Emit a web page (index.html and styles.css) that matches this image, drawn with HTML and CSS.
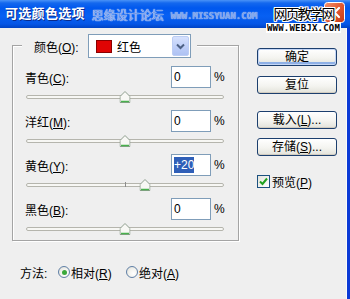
FILE: index.html
```html
<!DOCTYPE html>
<html lang="zh-CN">
<head>
<meta charset="utf-8">
<title>可选颜色选项</title>
<link rel="stylesheet" href="styles.css">
</head>
<body>
<div class="window">
  <div class="titlebar">
    <span class="title">可选颜色选项</span>
    <span class="wm-cn">思缘设计论坛</span>
    <span class="wm-url">WWW.MISSYUAN.COM</span>
    <svg class="close" width="21" height="21" viewBox="0 0 21 21">
      <defs>
        <linearGradient id="cg" x1="0" y1="0" x2="1" y2="1">
          <stop offset="0" stop-color="#f3946f"/>
          <stop offset=".5" stop-color="#e2582f"/>
          <stop offset="1" stop-color="#c43a16"/>
        </linearGradient>
      </defs>
      <rect x=".5" y=".5" width="20" height="20" rx="3" fill="url(#cg)" stroke="#fff"/>
      <path d="M6 6 L15 15 M15 6 L6 15" stroke="#fff" stroke-width="2.2" stroke-linecap="round"/>
    </svg>
    <div class="wm-webjx">
      <span class="wm-webjx-cn">网页教学网</span>
      <span class="wm-webjx-url">WWW.WEBJX.COM</span>
    </div>
  </div>

  <div class="content">
    <div class="left">
      <div class="group">
        <div class="group-head">
          <span class="head-lbl">颜色(<u>O</u>):</span>
          <div class="combo">
            <span class="swatch"></span>
            <span class="combo-text">红色</span>
            <span class="combo-btn">
              <svg width="9" height="7" viewBox="0 0 9 7"><path d="M1 1.5 L4.5 5 L8 1.5" fill="none" stroke="#4d6185" stroke-width="2"/></svg>
            </span>
          </div>
        </div>

        <div class="row">
          <div class="row-top">
            <span class="row-lbl">青色(<u>C</u>):</span>
            <span class="field">0</span>
            <span class="pct">%</span>
          </div>
          <div class="slider">
            <div class="track"></div>
            <svg class="thumb" style="left:50%" width="11" height="12" viewBox="0 0 11 12"><path d="M5.5 .5 L10.5 5.5 V11.5 H.5 V5.5 Z" fill="#f8f8f5" stroke="#8e9e8e"/><path d="M1.5 10.5 H9.5" stroke="#49b04e" stroke-width="1.5"/></svg>
          </div>
        </div>

        <div class="row">
          <div class="row-top">
            <span class="row-lbl">洋红(<u>M</u>):</span>
            <span class="field">0</span>
            <span class="pct">%</span>
          </div>
          <div class="slider">
            <div class="track"></div>
            <svg class="thumb" style="left:50%" width="11" height="12" viewBox="0 0 11 12"><path d="M5.5 .5 L10.5 5.5 V11.5 H.5 V5.5 Z" fill="#f8f8f5" stroke="#8e9e8e"/><path d="M1.5 10.5 H9.5" stroke="#49b04e" stroke-width="1.5"/></svg>
          </div>
        </div>

        <div class="row">
          <div class="row-top">
            <span class="row-lbl">黄色(<u>Y</u>):</span>
            <span class="field"><span class="sel">+20</span></span>
            <span class="pct">%</span>
          </div>
          <div class="slider">
            <div class="track"></div>
            <span class="tick"></span>
            <svg class="thumb" style="left:60%" width="11" height="12" viewBox="0 0 11 12"><path d="M5.5 .5 L10.5 5.5 V11.5 H.5 V5.5 Z" fill="#f8f8f5" stroke="#8e9e8e"/><path d="M1.5 10.5 H9.5" stroke="#49b04e" stroke-width="1.5"/></svg>
          </div>
        </div>

        <div class="row">
          <div class="row-top">
            <span class="row-lbl">黑色(<u>B</u>):</span>
            <span class="field">0</span>
            <span class="pct">%</span>
          </div>
          <div class="slider">
            <div class="track"></div>
            <svg class="thumb" style="left:50%" width="11" height="12" viewBox="0 0 11 12"><path d="M5.5 .5 L10.5 5.5 V11.5 H.5 V5.5 Z" fill="#f8f8f5" stroke="#8e9e8e"/><path d="M1.5 10.5 H9.5" stroke="#49b04e" stroke-width="1.5"/></svg>
          </div>
        </div>
      </div>

      <div class="method">
        <span class="method-lbl">方法:</span>
        <label class="opt opt-first"><span class="radio checked"></span><span>相对(<u>R</u>)</span></label>
        <label class="opt"><span class="radio"></span><span>绝对(<u>A</u>)</span></label>
      </div>
    </div>

    <div class="right">
      <span class="btn btn-default">确定</span>
      <span class="btn btn-reset">复位</span>
      <span class="btn btn-load">载入(<u>L</u>)...</span>
      <span class="btn btn-save">存储(<u>S</u>)...</span>
      <label class="check-row">
        <span class="checkbox"><svg width="11" height="11" viewBox="0 0 11 11"><path d="M2 5.5 L4.5 8 L9 2.5" fill="none" stroke="#21a121" stroke-width="2"/></svg></span>
        <span>预览(<u>P</u>)</span>
      </label>
    </div>
  </div>
</div>
</body>
</html>
```

FILE: styles.css
```css
* {
  box-sizing: border-box;
  margin: 0;
  padding: 0;
}

html, body {
  width: 350px;
  height: 299px;
  overflow: hidden;
}

body {
  font-family: "Liberation Sans", "Noto Sans CJK SC", sans-serif;
  font-size: 12px;
  color: #000;
  background: #efefef;
}

u {
  text-decoration: underline;
  text-underline-offset: 1px;
}

.window {
  width: 350px;
  height: 299px;
  position: relative;
  display: flex;
  flex-direction: column;
  background: #efefef;
}

/* ---------- title bar ---------- */
.titlebar {
  height: 28px;
  flex: none;
  display: flex;
  align-items: flex-start;
  position: relative;
  background: linear-gradient(to bottom, #4a93f7 0, #1468ee 3px, #0058ee 8px, #0760f3 16px, #0556e6 24px, #0043c4 28px);
  color: #fff;
}

.title {
  margin: 4px 0 0 5px;
  font: bold 13px/18px "Noto Sans CJK SC", sans-serif;
  letter-spacing: 0.3px;
  text-shadow: 1px 1px 0 #0a2a8a;
}

.wm-cn {
  margin: 6px 0 0 7px;
  font: 12px/18px "Noto Sans CJK SC", sans-serif;
  color: #6f9aea;
  text-shadow: 0 0 1px #eef4ff, 0 0 1px #eef4ff;
}

.wm-url {
  margin: 11px 0 0 7px;
  font: bold 9px/10px "DejaVu Sans Mono", monospace;
  color: #7aa2ea;
  text-shadow: 0 0 1px #eef4ff;
}

.close {
  margin: 2px 5px 0 auto;
  flex: none;
}

.wm-webjx {
  position: absolute;
  left: 266px;
  top: 4px;
  display: flex;
  flex-direction: column;
  align-items: center;
}

.wm-webjx-cn {
  font: 14px/18px "Noto Sans CJK SC", sans-serif;
  letter-spacing: -2px;
  color: #000;
  text-shadow: 1px 0 0 #fff, -1px 0 0 #fff, 0 1px 0 #fff, 0 -1px 0 #fff, 1px 1px 0 #fff, -1px -1px 0 #fff, 1px -1px 0 #fff, -1px 1px 0 #fff;
}

.wm-webjx-url {
  margin-top: 1px;
  padding: 0 1px;
  background: #fff;
  font: bold 9px/10px "DejaVu Sans Mono", monospace;
  letter-spacing: 0.2px;
  color: #000;
}

/* ---------- content ---------- */
.content {
  flex: 1;
  display: flex;
  gap: 18px;
  border-right: 3px solid #0b3ad6;
  box-shadow: inset -1px 0 0 #fbfbfb;
}

.left {
  width: 239px;
  flex: none;
}

.group {
  margin: 17px 0 0 12px;
  width: 227px;
  height: 196px;
  border: 1px solid #a4a4a4;
  box-shadow: inset 1px 1px 0 #fff, 1px 1px 0 #fff;
}

.group-head {
  display: flex;
  align-items: center;
  width: 175px;
  height: 24px;
  margin: -12px 0 0 9px;
  padding: 0 6px 0 12px;
  background: #efefef;
}

.head-lbl {
  width: 54px;
  flex: none;
}

.combo {
  width: 103px;
  height: 24px;
  flex: none;
  display: flex;
  align-items: center;
  border: 1px solid #7f9db9;
  background: #fff;
}

.swatch {
  width: 16px;
  height: 13px;
  margin-left: 7px;
  background: #e00404;
  border: 1px solid #8a0000;
}

.combo-text {
  margin-left: 5px;
}

.combo-btn {
  margin: 0 1px 0 auto;
  width: 17px;
  height: 20px;
  display: flex;
  align-items: center;
  justify-content: center;
  border: 1px solid #bccdf4;
  border-radius: 2px;
  background: linear-gradient(to bottom, #d6e1fd, #bccdf8 60%, #aec2f3);
}

.row {
  margin-top: 6px;
}

.group-head + .row {
  margin-top: 8px;
}

.row-top {
  display: flex;
  align-items: center;
  height: 22px;
  padding-left: 12px;
}

.row-lbl {
  width: 146px;
  flex: none;
}

.field {
  width: 40px;
  height: 22px;
  flex: none;
  border: 1px solid #7f9db9;
  background: #fff;
  padding-left: 2px;
  font: 12px/20px "Liberation Sans", sans-serif;
}

.sel {
  background: #2f5fb8;
  color: #fff;
  padding: 1px 0;
}

.pct {
  margin-left: 3px;
}

.slider {
  position: relative;
  margin: 2px 0 0 13px;
  width: 198px;
  height: 14px;
  display: flex;
  align-items: center;
}

.track {
  width: 100%;
  height: 4px;
  border: 1px solid #b5b5ad;
  border-radius: 2px;
  background: #f7f7f4;
}

.thumb {
  position: absolute;
  top: 1px;
  transform: translateX(-50%);
}

.tick {
  position: absolute;
  left: 50%;
  top: 4px;
  width: 1px;
  height: 5px;
  background: #8c8c8c;
}

/* ---------- method row ---------- */
.method {
  display: flex;
  align-items: center;
  height: 20px;
  margin-top: 21px;
  padding-left: 20px;
}

.method-lbl {
  width: 38px;
  flex: none;
}

.opt {
  display: flex;
  align-items: center;
}

.opt-first {
  width: 68px;
}

.radio {
  width: 12px;
  height: 12px;
  margin-right: 1px;
  border: 1px solid #5f7fa6;
  border-radius: 50%;
  background: radial-gradient(circle at 65% 65%, #ffffff 0, #f2f2ee 50%, #d8d8d0 100%);
  display: flex;
  align-items: center;
  justify-content: center;
}

.radio.checked::after {
  content: "";
  width: 5px;
  height: 5px;
  border-radius: 50%;
  background: #3aa83a;
}

/* ---------- right column ---------- */
.right {
  width: 80px;
  flex: none;
  display: flex;
  flex-direction: column;
  padding-top: 20px;
}

.btn {
  width: 80px;
  height: 18px;
  display: flex;
  align-items: center;
  justify-content: center;
  border: 1px solid #1c3f6e;
  border-radius: 3px;
  background: linear-gradient(to bottom, #ffffff, #f4f4f0 55%, #e2e2da);
  box-shadow: inset 0 -1px 0 #d2ccc0;
  line-height: 16px;
}

.btn-default {
  box-shadow: inset 0 0 0 1px #c4d6f6, inset 0 -2px 0 1px #8eb0e6;
}

.btn-reset {
  margin-top: 10px;
}

.btn-load {
  margin-top: 17px;
}

.btn-save {
  margin-top: 9px;
}

.check-row {
  margin-top: 17px;
  display: flex;
  align-items: center;
}

.checkbox {
  width: 13px;
  height: 13px;
  margin-right: 2px;
  display: flex;
  align-items: center;
  justify-content: center;
  border: 1px solid #1c5180;
  background: linear-gradient(135deg, #e4e4dc, #ffffff);
}
```
